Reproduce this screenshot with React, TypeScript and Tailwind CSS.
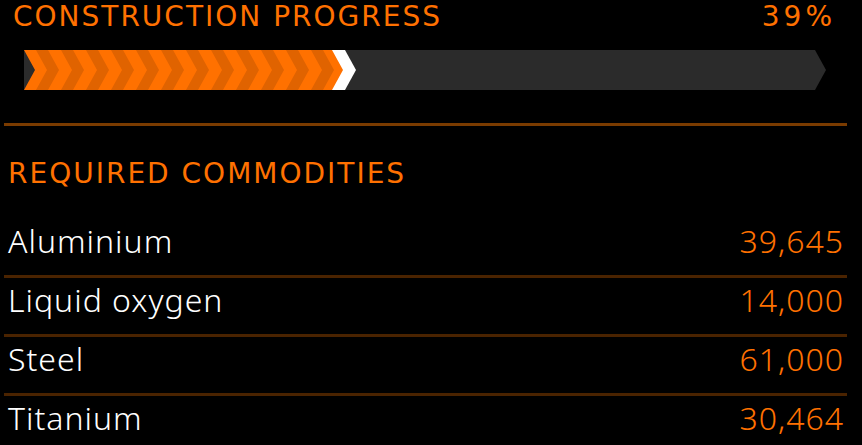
import React from 'react';

// commodity rows shown under the progress bar
const commodities = [
  { name: 'Aluminium', amount: '39,645' },
  { name: 'Liquid oxygen', amount: '14,000' },
  { name: 'Steel', amount: '61,000' },
  { name: 'Titanium', amount: '30,464' },
];

const ORANGE = '#ff7100';
const ORANGE_DARK = '#e06300';

const ProgressBar: React.FC<{ percent: number }> = ({ percent }) => {
  const total = 791;
  const end = Math.round((total * percent) / 100); // orange body end
  const stripes = [];
  for (let x = 12; x < end + 25; x += 25) {
    stripes.push(
      <polygon
        key={x}
        points={`${x},0 ${x + 12},0 ${x + 23},20 ${x + 12},40 ${x},40 ${x + 11},20`}
        fill={ORANGE_DARK}
      />
    );
  }
  return (
    <svg width={803} height={40} viewBox="0 0 803 40" className="block">
      <defs>
        <clipPath id="fill">
          <polygon points={`0,0 ${end},0 ${end + 11},20 ${end},40 0,40 11,20`} />
        </clipPath>
      </defs>
      <polygon points="0,0 791,0 802,20 791,40 0,40" fill="#2b2b2b" />
      <polygon points={`${end - 13},0 ${end + 13},0 ${end + 24},20 ${end + 13},40 ${end - 13},40`} fill="#ffffff" />
      <polygon points={`0,0 ${end},0 ${end + 11},20 ${end},40 0,40 11,20`} fill={ORANGE} />
      <g clipPath="url(#fill)">{stripes}</g>
    </svg>
  );
};

const App: React.FC = () => {
  return (
    <div className="w-[862px] h-[445px] bg-black overflow-hidden">
      {/* Header */}
      <div
        className="flex justify-between pt-[3px] pl-[13px] pr-[26px] text-[28px] leading-none tracking-[2px] text-[#ff7100]"
        style={{ fontFamily: '"DejaVu Sans", sans-serif' }}
      >
        <span>CONSTRUCTION PROGRESS</span>
        <span className="tracking-[4px]">39%</span>
      </div>

      <div className="mt-[19px] ml-[24px]">
        <ProgressBar percent={39} />
      </div>

      <div className="mt-[33px] ml-[4px] mr-[15px] h-[3px] bg-[#7a3b00]" />

      <h2
        className="mt-[34px] pl-[8px] text-[28px] leading-none tracking-[2px] font-normal text-[#ff7100]"
        style={{ fontFamily: '"DejaVu Sans", sans-serif' }}
      >
        REQUIRED COMMODITIES
      </h2>

      {/* Commodity list */}
      <div className="mt-[31px] ml-[4px] mr-[15px]" style={{ fontFamily: '"Noto Sans", sans-serif' }}>
        {commodities.map((c) => (
          <div
            key={c.name}
            className="flex justify-between h-[59px] pt-[6px] pl-[4px] pr-[3px] border-b-[3px] border-[#4a2300] text-[32px] leading-[32px] tracking-[1px] font-light"
          >
            <span className="text-white">{c.name}</span>
            <span className="text-[#ff7100]">{c.amount}</span>
          </div>
        ))}
      </div>
    </div>
  );
};

export default App;
